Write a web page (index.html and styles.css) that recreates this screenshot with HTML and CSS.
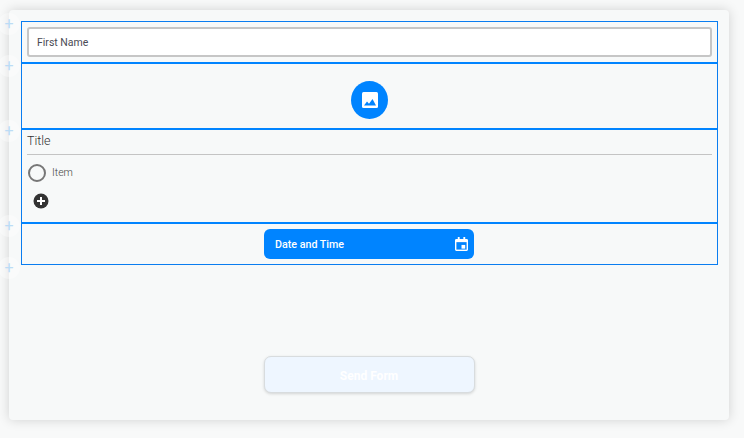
FILE: index.html
```html
<!DOCTYPE html>
<html lang="en">
<head>
  <meta charset="UTF-8" />
  <meta name="viewport" content="width=device-width, initial-scale=1.0"/>
  <title>Form Builder</title>
  <link rel="stylesheet" href="styles.css">
</head>
<body>
  <div class="card">
    <!-- drag handles -->
    <span class="handle handle-1">+</span>
    <span class="handle handle-2">+</span>
    <span class="handle handle-3">+</span>
    <span class="handle handle-4">+</span>
    <span class="handle handle-5">+</span>

    <div class="fields">
      <div class="section section-input">
        <div class="text-input">First Name</div>
      </div>

      <div class="section section-image">
        <div class="image-btn">
          <svg width="16" height="16" viewBox="0 0 16 16">
            <rect x="0" y="0" width="16" height="16" rx="1.5" fill="#fff"/>
            <path d="M2 13.500L5 9.500l2 2.200L10.500 7l3.500 6.500z" fill="#0084ff"/>
          </svg>
        </div>
      </div>

      <div class="section section-choice">
        <div class="choice-title">Title</div>
        <div class="choice-item">
          <span class="radio"></span>
          <span class="item-label">Item</span>
        </div>
        <div class="add-item">
          <svg width="16" height="16" viewBox="0 0 16 16">
            <circle cx="8" cy="8" r="7.500" fill="#333"/>
            <path d="M8 4v8M4 8h8" stroke="#fff" stroke-width="2"/>
          </svg>
        </div>
      </div>

      <div class="section section-date">
        <div class="date-btn">
          <span>Date and Time</span>
          <svg width="13" height="14" viewBox="0 0 14 15">
            <path d="M3 0h2v2h4V0h2v2h1.500A1.500 1.500 0 0 1 14 3.500V13.500A1.500 1.500 0 0 1 12.500 15h-11A1.500 1.500 0 0 1 0 13.500V3.500A1.500 1.500 0 0 1 1.500 2H3z" fill="#fff"/>
            <rect x="1.500" y="5.500" width="11" height="8" fill="#0084ff"/>
            <rect x="7" y="8.500" width="4" height="4" fill="#fff"/>
          </svg>
        </div>
      </div>
    </div>

    <div class="submit-row">
      <button class="submit-btn">Send Form</button>
    </div>
  </div>
</body>
</html>
```

FILE: styles.css
```css
body {
  margin: 0;
  height: 438px;
  overflow: hidden;
  background: #f8f9f9;
  font-family: Roboto, sans-serif;
  color: #444;
}

.card {
  position: relative;
  box-sizing: border-box;
  width: 720px;
  height: 410px;
  margin: 10px 0 0 9px;
  padding: 11px 11px 0 12px;
  background: #f7f9f9;
  border-radius: 4px;
  box-shadow: 0 0 12px rgba(0,0,0,0.16);
}

.handle {
  position: absolute;
  left: -11px;
  width: 22px;
  height: 22px;
  border-radius: 50%;
  background: rgba(255,255,255,0.35);
  color: #bcdcf5;
  font-size: 16px;
  line-height: 22px;
  text-align: center;
}

.handle-1 { top: 3px; }
.handle-2 { top: 45px; }
.handle-3 { top: 110px; }
.handle-4 { top: 205px; }
.handle-5 { top: 247px; }

.fields {
  border: 1px solid #0a7df0;
}

.section {
  border-bottom: 2px solid #0084ff;
}

.section-input {
  padding: 5px;
}

.text-input {
  box-sizing: border-box;
  height: 30px;
  padding-left: 8px;
  background: #fff;
  border: 2px solid #c6c6c6;
  border-radius: 3px;
  font-size: 10.5px;
  line-height: 28px;
  color: #4a4a55;
}

.section-image {
  display: flex;
  justify-content: center;
  height: 64px;
}

.image-btn {
  display: flex;
  align-items: center;
  justify-content: center;
  width: 37px;
  height: 38px;
  margin-top: 17px;
  border-radius: 50%;
  background: #0084ff;
}

.section-choice {
  height: 92px;
  padding: 0 5px;
}

.choice-title {
  height: 24px;
  border-bottom: 1px solid #c4c4c4;
  font-size: 12.5px;
  font-weight: 300;
  line-height: 22px;
  color: #333;
}

.choice-item {
  display: flex;
  align-items: center;
  gap: 6px;
  margin-top: 9px;
  padding-left: 1px;
}

.radio {
  box-sizing: border-box;
  width: 18px;
  height: 18px;
  border: 2px solid #777;
  border-radius: 50%;
}

.item-label {
  padding-bottom: 2px;
  font-size: 10.5px;
  font-weight: 300;
  color: #444;
}

.add-item {
  display: flex;
  margin: 11px 0 0 6px;
}

.section-date {
  display: flex;
  justify-content: center;
  padding: 5px 1px 5px 0;
  border-bottom: 0;
}

.date-btn {
  display: flex;
  align-items: center;
  justify-content: space-between;
  box-sizing: border-box;
  width: 210px;
  height: 30px;
  padding: 0 6px 0 11px;
  background: #0084ff;
  border-radius: 6px;
  color: #fff;
  font-size: 10.7px;
  font-weight: 500;
}

.submit-row {
  display: flex;
  justify-content: center;
  margin-top: 91px;
  padding-right: 1px;
}

.submit-btn {
  width: 211px;
  height: 37px;
  padding: 2px 0 0;
  background: #eef6ff;
  border: 1px solid #d8dcde;
  border-radius: 7px;
  box-shadow: 0 1px 3px rgba(0,0,0,0.15);
  color: #fff;
  font-family: Roboto, sans-serif;
  font-size: 12px;
  font-weight: 700;
}
```
